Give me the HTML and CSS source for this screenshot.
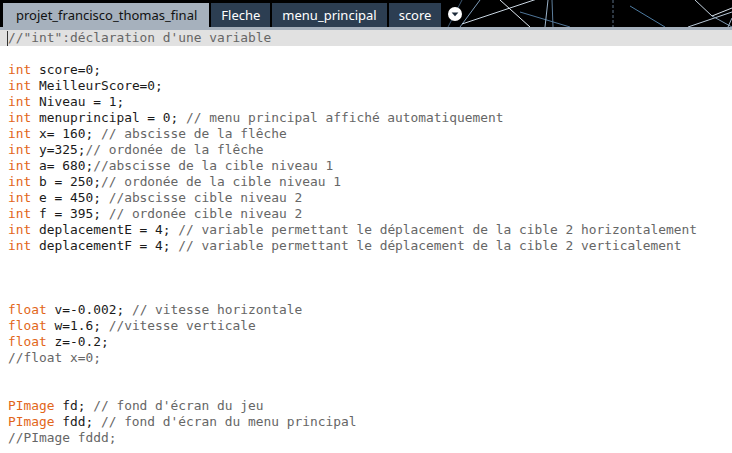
FILE: index.html
```html
<!DOCTYPE html>
<html>
<head>
<meta charset="utf-8">
<link rel="stylesheet" href="styles.css">
</head>
<body>
<div class="header">
  <svg class="bg-lines" width="732" height="27" viewBox="0 0 732 27">
    <g fill="none" stroke-width="1">
      <line x1="460" y1="27" x2="480" y2="0" stroke="#7d9bb8"/>
      <line x1="462" y1="24" x2="540" y2="-2" stroke="#c9d6e2"/>
      <line x1="500" y1="0" x2="530" y2="27" stroke="#dfe8f0"/>
      <line x1="520" y1="12" x2="570" y2="27" stroke="#4f7598"/>
      <line x1="548" y1="0" x2="545" y2="27" stroke="#9ab2c8"/>
      <line x1="552" y1="0" x2="553" y2="27" stroke="#5d7e9c"/>
      <line x1="613" y1="0" x2="613" y2="27" stroke="#5a6f84" stroke-dasharray="3 2"/>
      <line x1="630" y1="6" x2="665" y2="27" stroke="#4d7aa0"/>
      <line x1="688" y1="27" x2="732" y2="12" stroke="#b8c8d8"/>
      <line x1="695" y1="0" x2="712" y2="16" stroke="#c4d2df"/>
      <line x1="712" y1="16" x2="732" y2="27" stroke="#7d97b0"/>
      <line x1="712" y1="16" x2="732" y2="8" stroke="#d7e2ec"/>
      <line x1="728" y1="27" x2="732" y2="18" stroke="#9fb5ca"/>
      <line x1="448" y1="27" x2="462" y2="0" stroke="#3c5670"/>
    </g>
  </svg>
  <div class="tabs">
    <div class="tab active">projet_francisco_thomas_final</div>
    <div class="tab">Fleche</div>
    <div class="tab">menu_principal</div>
    <div class="tab">score</div>
    <div class="menu-btn">
      <svg width="14" height="14" viewBox="0 0 14 14"><circle cx="7" cy="7" r="7" fill="#ffffff"/><path d="M3.6 5.4 L10.4 5.4 L7 9.2 Z" fill="#1d2b3a"/></svg>
    </div>
  </div>
</div>
<div class="strip"></div>
<div class="editor">
<div class="line current"><span class="cursor"></span><span class="c">//"int":déclaration d'une variable</span></div>
<div class="line"></div>
<div class="line"><span class="k">int</span> score=0;</div>
<div class="line"><span class="k">int</span> MeilleurScore=0;</div>
<div class="line"><span class="k">int</span> Niveau = 1;</div>
<div class="line"><span class="k">int</span> menuprincipal = 0; <span class="c">// menu principal affiché automatiquement</span></div>
<div class="line"><span class="k">int</span> x= 160; <span class="c">// abscisse de la flêche</span></div>
<div class="line"><span class="k">int</span> y=325;<span class="c">// ordonée de la flêche</span></div>
<div class="line"><span class="k">int</span> a= 680;<span class="c">//abscisse de la cible niveau 1</span></div>
<div class="line"><span class="k">int</span> b = 250;<span class="c">// ordonée de la cible niveau 1</span></div>
<div class="line"><span class="k">int</span> e = 450; <span class="c">//abscisse cible niveau 2</span></div>
<div class="line"><span class="k">int</span> f = 395; <span class="c">// ordonée cible niveau 2</span></div>
<div class="line"><span class="k">int</span> deplacementE = 4; <span class="c">// variable permettant le déplacement de la cible 2 horizontalement</span></div>
<div class="line"><span class="k">int</span> deplacementF = 4; <span class="c">// variable permettant le déplacement de la cible 2 verticalement</span></div>
<div class="line"></div>
<div class="line"></div>
<div class="line"></div>
<div class="line"><span class="k">float</span> v=-0.002; <span class="c">// vitesse horizontale</span></div>
<div class="line"><span class="k">float</span> w=1.6; <span class="c">//vitesse verticale</span></div>
<div class="line"><span class="k">float</span> z=-0.2;</div>
<div class="line"><span class="c">//float x=0;</span></div>
<div class="line"></div>
<div class="line"></div>
<div class="line"><span class="k">PImage</span> fd; <span class="c">// fond d'écran du jeu</span></div>
<div class="line"><span class="k">PImage</span> fdd; <span class="c">// fond d'écran du menu principal</span></div>
<div class="line"><span class="c">//PImage fddd;</span></div>
</div>
</body>
</html>
```
FILE: styles.css
```css
html, body {
  margin: 0;
  padding: 0;
  background: #ffffff;
  overflow: hidden;
}
.header {
  position: relative;
  height: 27px;
  background: #000000;
}
.bg-lines {
  position: absolute;
  left: 0;
  top: 0;
}
.tabs {
  position: relative;
  display: flex;
  align-items: flex-end;
  height: 27px;
  padding-left: 3px;
  gap: 2px;
}
.tab {
  height: 24px;
  display: flex;
  align-items: center;
  padding: 0 10px;
  background: #2c3e52;
  color: #ffffff;
  font-family: "Noto Sans", sans-serif;
  font-size: 13px;
  box-sizing: border-box;
}
.tab.active {
  background: #a6b1bd;
  color: #111111;
  padding: 0 12px 0 13px;
}
.menu-btn {
  height: 27px;
  display: flex;
  align-items: center;
  margin-left: 5px;
}
.strip {
  height: 3px;
  background: #a6b1bd;
}
.editor {
  font-family: "DejaVu Sans Mono", monospace;
  font-size: 12.86px;
  color: #1a1a1a;
}
.line {
  height: 16px;
  line-height: 16px;
  padding-left: 8px;
  white-space: pre;
  position: relative;
}
.line.current {
  background: #e1e1e1;
}
.cursor {
  position: absolute;
  left: 7px;
  top: 1px;
  width: 1px;
  height: 15px;
  background: #333333;
}
.k {
  color: #e2661a;
}
.c {
  color: #666666;
}
```
